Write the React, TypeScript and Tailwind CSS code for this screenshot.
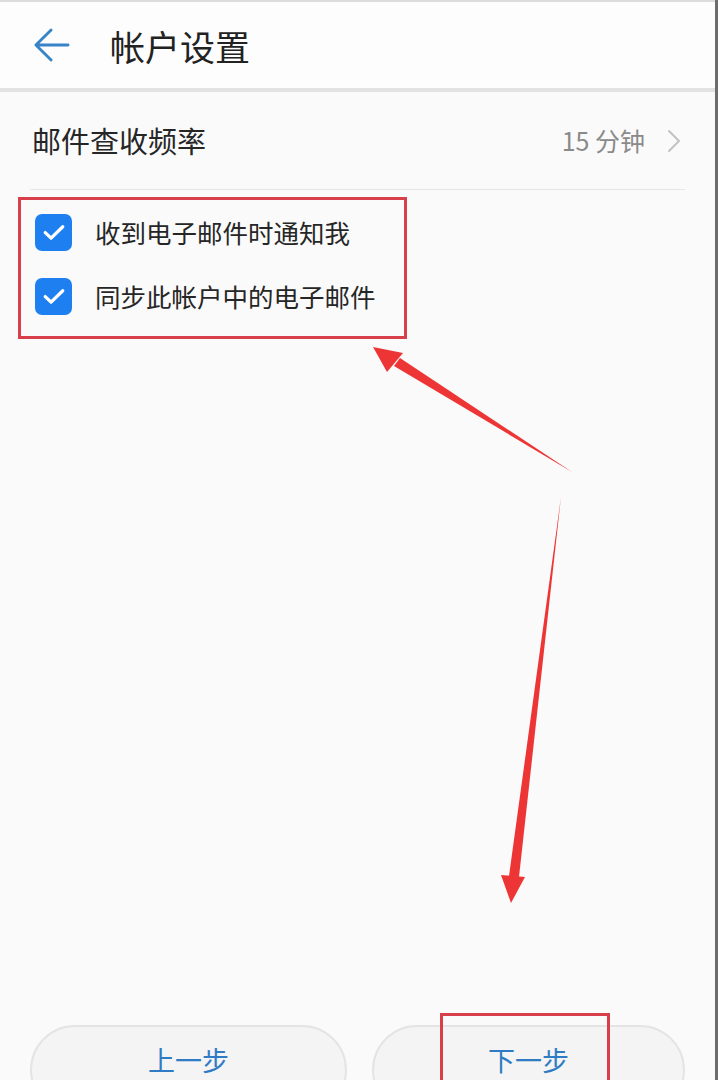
import React from "react";

const CheckIcon = () => (
  <svg viewBox="0 0 24 24" width="28" height="28" fill="none">
    <path d="M4.5 12.5l5 4.8L19.5 7.5" stroke="white" strokeWidth="2.8" strokeLinecap="round" strokeLinejoin="round" />
  </svg>
);

const CheckRow = ({ label }: { label: string }) => (
  <div className="flex h-16 items-center">
    <div className="flex h-[37px] w-[37px] items-center justify-center rounded-[7px] bg-[#1d7ff0]">
      <CheckIcon />
    </div>
    <span className="ml-[23px] text-[25.5px] leading-none text-[#262626]">{label}</span>
  </div>
);

const Annotations = () => (
  <svg className="pointer-events-none absolute left-0 top-0" width="718" height="1080" viewBox="0 0 718 1080">
    {/* arrow toward the checkbox group */}
    <polygon points="572,472 400,358 394,366" fill="#ee3535" />
    <polygon points="373,347 403,353 387,372" fill="#ee3535" />
    {/* arrow toward the next button */}
    <polygon points="561,497 509,876 519,877" fill="#ee3535" />
    <polygon points="511,903 501,875 525,877" fill="#ee3535" />
  </svg>
);

export default function App() {
  return (
    <div
      className="relative flex h-[1080px] w-[718px] flex-col overflow-hidden border-r-[3px] border-[#6d6d6d] bg-[#fafafa]"
      style={{ fontFamily: '"Noto Sans CJK SC", "Noto Sans", sans-serif' }}
    >
      <div className="h-[2px] bg-[#dcdcdc]" />
      <header className="flex h-[86px] items-center bg-[#fdfdfd]">
        <svg viewBox="0 0 40 36" className="ml-[33px] h-[34px] w-[38px]" fill="none">
          <path d="M19 2L3 18l16 16M3 18h34" stroke="#3784c9" strokeWidth="3" strokeLinecap="round" strokeLinejoin="round" />
        </svg>
        <h1 className="ml-[39px] text-[35px] font-normal leading-none text-[#222]">帐户设置</h1>
      </header>
      <div className="h-1 bg-[#e2e2e2]" />

      <div className="flex h-[97px] items-center px-[32px]">
        <span className="text-[29px] leading-none text-[#262626]">邮件查收频率</span>
        <span className="ml-auto text-[25px] leading-none text-[#8a8a8a]">15 分钟</span>
        <svg viewBox="0 0 14 24" className="ml-[22px] mr-[2px] h-[24px] w-[14px]" fill="none">
          <path d="M2 2l10 10L2 22" stroke="#c2c2c2" strokeWidth="2" strokeLinecap="round" strokeLinejoin="round" />
        </svg>
      </div>
      <div className="mx-[30px] h-px bg-[#e6e6e6]" />

      <div className="ml-[18px] mt-[7px] w-[389px] border-[3px] border-[#d7404a] px-[14px] pb-[8px] pt-0">
        <CheckRow label="收到电子邮件时通知我" />
        <CheckRow label="同步此帐户中的电子邮件" />
      </div>

      <div className="flex-1" />

      <div className="mb-[-35px] flex gap-[25px] px-[30px]">
        <button className="flex h-[90px] flex-1 items-start justify-center rounded-full border-2 border-[#e4e4e4] bg-[#f4f4f4] pt-[19px] text-[27px] leading-none text-[#2f7cc4]">
          上一步
        </button>
        <div className="relative flex-1">
          <button className="flex h-[90px] w-full items-start justify-center rounded-full border-2 border-[#e4e4e4] bg-[#f4f4f4] pt-[19px] text-[27px] leading-none text-[#2f7cc4]">
            下一步
          </button>
          <div className="absolute left-[68px] top-[-12px] h-[100px] w-[170px] border-[3px] border-[#d7404a]" />
        </div>
      </div>

      <Annotations />
    </div>
  );
}
